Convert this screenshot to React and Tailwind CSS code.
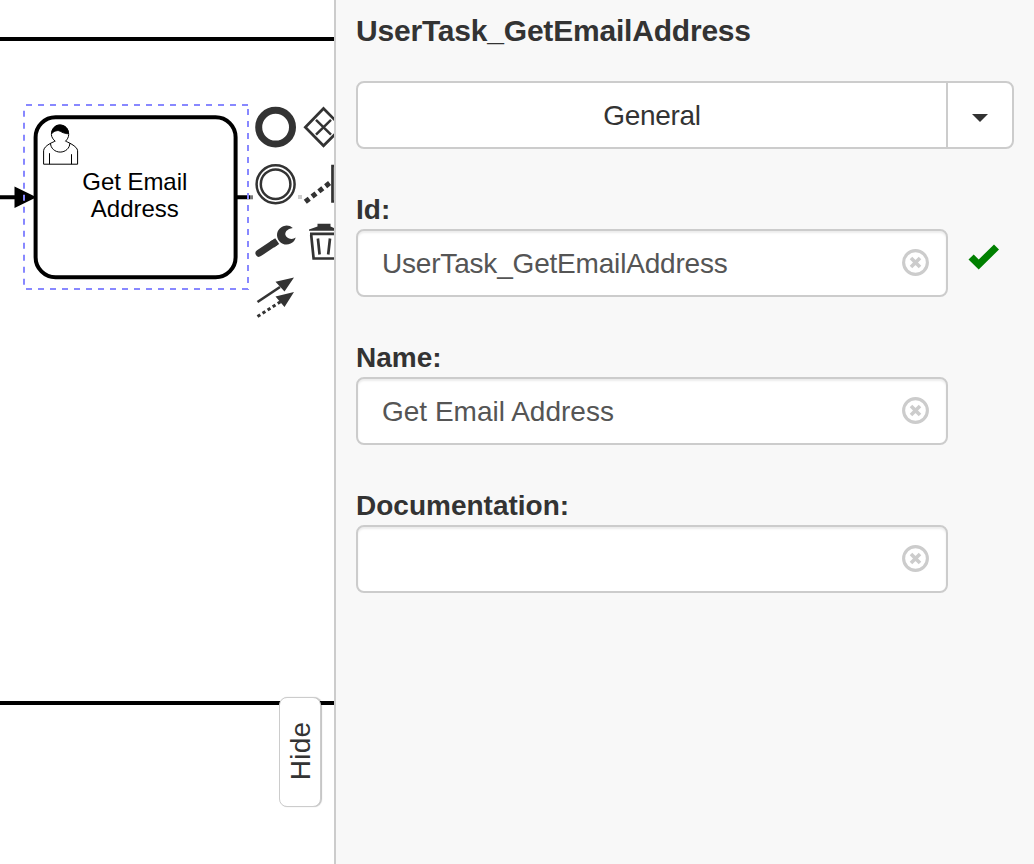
import React from "react";

function Diagram() {
  return (
    <svg className="block h-[864px] w-[334px]" viewBox="0 0 334 864" fill="none" fontFamily='"Liberation Sans", Arial, sans-serif'>
      <g stroke="#000" strokeWidth="4">
        <path d="M0 39H334M0 703H334M0 197.300H20M236 197.300H250" />
        <rect x="35.600" y="117.200" width="200" height="160" rx="20" fill="#fff" />
      </g>
      <path d="M14.500 186.500L36.500 197.300L14.500 208Z" fill="#000" />
      <path d="M250 195.300h3v4h-3z" fill="#777" />
      <g stroke="#8888ff" strokeWidth="2" strokeDasharray="6 6">
        <path d="M26 105H249M26 289H249M24 110.700V290M248 109V290" />
      </g>
      <g transform="translate(35.500 117.200) scale(2)" stroke="#000" strokeWidth="0.5">
        <path fill="#fff" d="m15,12c0.909,-0.845 1.594,-2.049 1.594,-3.385 0,-2.554 -1.805,-4.622 -4.357,-4.622 -2.552,0 -4.288,2.068 -4.288,4.622 0,1.348 0.974,2.562 1.896,3.405 -0.529,0.187 -5.669,2.097 -5.794,4.756v6.718h17v-6.718c0,-2.298 -5.528,-4.595 -6.051,-4.776zm-8,6l0,5.500m11,0l0,-5" />
        <path d="m17.162,13.009c0,2.447 -2.158,4.431 -4.821,4.431 -2.665,0 -4.822,-1.981 -4.822,-4.431" />
        <path fill="#000" d="m8.100,8.200c0,0 2.251,-2.358 4.274,-1.177 2.024,1.181 4.221,1.537 4.124,0.965 -0.098,-0.570 -0.117,-3.791 -4.191,-4.136 -3.575,0.001 -4.208,3.367 -4.207,4.348z" />
      </g>
      <g fill="#000" fontSize="24" textAnchor="middle">
        <text x="134.800" y="190" textLength="105">Get Email</text>
        <text x="134.800" y="217" textLength="88">Address</text>
      </g>
      <g stroke="#333">
        <circle cx="275.600" cy="127.200" r="16.900" strokeWidth="7" />
        <path d="M323.500 108.500L342 127.200L323.500 145.800L305.300 127.200Z" strokeWidth="2.700" />
        <path d="M316 119.800L331 134.700M331 119.800L316 134.700" strokeWidth="2.500" />
        <circle cx="275.600" cy="184.200" r="19" strokeWidth="2.500" />
        <circle cx="275.600" cy="184.200" r="14.800" strokeWidth="2.500" />
        <path d="M305.300 201.800L331 182" strokeWidth="5" strokeDasharray="5 3.550" />
        <path d="M340 166H332.500V201.500H340" strokeWidth="2.700" />
      </g>
      <path d="M298 195h4v4h-4z" fill="#ccc" />
      <path d="M259 253.200L274 243.200" stroke="#333" strokeWidth="7" strokeLinecap="round" />
      <path d="M270 241.700L275.200 238.200L279.200 244L274 247.500Z" fill="#333" />
      <path d="M292.800 227.900A9.500 9.500 0 1 0 295.700 237.500Q292.500 240 288 238Q283.500 235 286.300 231Q288.500 228.300 292.800 227.900Z" fill="#333" />
      <g stroke="#333" strokeWidth="2.700">
        <path d="M310 233.800H340M311.200 235L313.600 258.500H334" />
        <path d="M317.900 238.500L319.600 254.500M330 238.500L328.200 254.500" />
      </g>
      <path d="M309 230.800V229.500L317.500 226.500V223.800H330.500V226.500L338 229.500V230.800Z" fill="#333" />
      <path d="M257.500 302L280 287" stroke="#333" strokeWidth="2.600" />
      <path d="M257.500 316.500L281 301.500" stroke="#333" strokeWidth="3" strokeDasharray="3.300 2.700" />
      <path d="M294 277.500L275.500 281.800L284.500 291.500ZM294 292L275.500 296.500L284.500 307Z" fill="#333" />
    </svg>
  );
}

function ClearIcon() {
  return (
    <svg className="mb-px size-[27px]" viewBox="0 0 27 27" fill="none" stroke="#ccc">
      <circle cx="13.500" cy="13.500" r="11.900" strokeWidth="3.100" />
      <path d="M9 9L18 18M18 9L9 18" strokeWidth="3.600" />
    </svg>
  );
}

function Field({ label, value, spacing = "", valid }) {
  return (
    <div className="flex flex-col">
      <label className="h-10 pt-px text-[28px] leading-10 font-bold">{label}</label>
      <div className="flex items-center">
        <div className="flex h-[68px] w-[592px] items-center justify-between rounded-lg border-2 border-[#ccc] bg-white pr-[17px] pl-6 text-[#555] shadow-[inset_0_2px_2px_rgba(0,0,0,0.075)]">
          <span className={`pt-0.5 text-[28px] leading-10 whitespace-nowrap ${spacing}`}>{value}</span>
          <ClearIcon />
        </div>
        {valid && (
          <svg className="mb-3 ml-5 h-[26px] w-[31px]" viewBox="0 0 31 26" fill="#008000">
            <path d="M0.500 15.500L5.700 10.500L10.700 15.500L26 0.500L31 5.500L10.700 25.500Z" />
          </svg>
        )}
      </div>
    </div>
  );
}

export default function App() {
  return (
    <div className="flex h-[864px] w-[1034px] overflow-hidden bg-white font-['Liberation_Sans',Arial,sans-serif] text-[#333]">
      <main className="relative w-[334px] shrink-0 overflow-hidden">
        <Diagram />
        <button className="absolute top-[697px] left-[279px] flex h-[110px] w-[42px] items-center justify-center rounded-lg border border-[#ccc] bg-white pb-0.5 pl-0.5 shadow-[1px_0_1px_rgba(0,0,0,0.25)]">
          <span className="-rotate-90 text-[28px] leading-10 tracking-[0.2px]">Hide</span>
        </button>
      </main>
      <aside className="flex flex-1 flex-col border-l-2 border-[#ccc] bg-[#f8f8f8] pt-[11px] pl-5">
        <h1 className="h-10 text-[30px] leading-10 font-bold tracking-[-0.2px]">UserTask_GetEmailAddress</h1>
        <div className="mt-[30px] flex h-[68px] w-[658px] rounded-lg border-2 border-[#ccc] bg-white">
          <div className="flex w-[588px] items-center justify-center pt-0.5 text-[28px] tracking-[-0.3px]">General</div>
          <div className="flex flex-1 items-center justify-center border-l-2 border-[#ccc]">
            <svg className="mt-1.5 h-2 w-4" viewBox="0 0 16 8" fill="#333">
              <path d="M0 0H16L8 8Z" />
            </svg>
          </div>
        </div>
        <div className="mt-10 flex flex-col gap-10">
          <Field label="Id:" value="UserTask_GetEmailAddress" spacing="tracking-[-0.19px]" valid />
          <Field label="Name:" value="Get Email Address" />
          <Field label="Documentation:" value="" />
        </div>
      </aside>
    </div>
  );
}
